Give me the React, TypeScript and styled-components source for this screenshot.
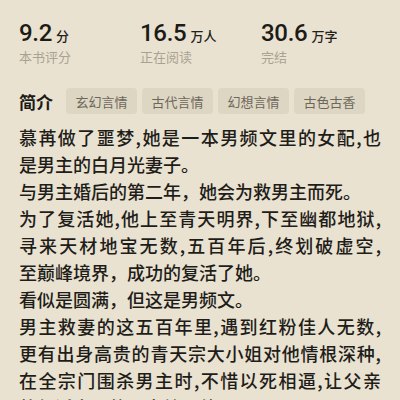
import * as React from 'react';
import styled, { createGlobalStyle } from 'styled-components';

const GlobalStyle = createGlobalStyle`
  html, body {
    margin: 0;
    padding: 0;
    background: #e9e2d0;
  }
  body {
    font-family: "Noto Sans CJK SC", "Noto Sans", sans-serif;
    color: #1f1d1a;
    overflow: hidden;
  }
`;

const Page = styled.div`
  display: flex;
  flex-direction: column;
  padding: 19px 19px 0;
  height: 400px;
  box-sizing: border-box;
  overflow: hidden;
`;

const Stats = styled.div`
  display: grid;
  grid-template-columns: repeat(3, 121px);
`;

const Stat = styled.div`
  display: flex;
  flex-direction: column;
`;

const Value = styled.div`
  display: flex;
  align-items: baseline;
  height: 28px;
  line-height: 28px;
`;

const Num = styled.span`
  font-family: Roboto, "Noto Sans", sans-serif;
  font-size: 24px;
  font-weight: 500;
  color: #1d1b17;
  letter-spacing: -0.3px;
`;

const Unit = styled.span`
  font-size: 13px;
  font-weight: 500;
  margin-left: 4px;
  color: #24211c;
`;

const Label = styled.div`
  margin-top: 1px;
  font-size: 13px;
  line-height: 18px;
  color: #a9a293;
`;

const IntroHeader = styled.div`
  display: flex;
  align-items: center;
  margin-top: 22px;
  height: 26px;
`;

const Title = styled.div`
  font-size: 17px;
  font-weight: 700;
  color: #1d1b17;
  margin-right: 13px;
`;

const Tags = styled.div`
  display: flex;
  gap: 5px;
`;

const Tag = styled.span`
  display: inline-flex;
  align-items: center;
  height: 26px;
  padding: 0 9.5px;
  border-radius: 4px;
  background: #ddd6c3;
  color: #6d675b;
  font-size: 13px;
`;

const Summary = styled.div`
  margin-top: 10px;
`;

const Para = styled.div``;

const Line = styled.div<{ $justify?: boolean }>`
  font-size: 18px;
  font-weight: 500;
  line-height: 27px;
  white-space: nowrap;
  text-align: justify;
  text-align-last: ${(p) => (p.$justify ? 'justify' : 'left')};
  color: #1f1d1a;
`;

const stats = [
  { num: '9.2', unit: '分', label: '本书评分' },
  { num: '16.5', unit: '万人', label: '正在阅读' },
  { num: '30.6', unit: '万字', label: '完结' },
];

const tags = ['玄幻言情', '古代言情', '幻想言情', '古色古香'];

// each paragraph is split into its rendered lines; all but the last are stretched
const paragraphs = [
  ['慕苒做了噩梦,她是一本男频文里的女配,也', '是男主的白月光妻子。'],
  ['与男主婚后的第二年，她会为救男主而死。'],
  [
    '为了复活她,他上至青天明界,下至幽都地狱,',
    '寻来天材地宝无数,五百年后,终划破虚空,',
    '至巅峰境界，成功的复活了她。',
  ],
  ['看似是圆满，但这是男频文。'],
  [
    '男主救妻的这五百年里,遇到红粉佳人无数,',
    '更有出身高贵的青天宗大小姐对他情根深种,',
    '在全宗门围杀男主时,不惜以死相逼,让父亲',
    '将复活妻子的至宝给了他。',
  ],
];

export default function App() {
  return (
    <>
      <GlobalStyle />
      <Page>
        <Stats>
          {stats.map((s) => (
            <Stat key={s.label}>
              <Value>
                <Num>{s.num}</Num>
                <Unit>{s.unit}</Unit>
              </Value>
              <Label>{s.label}</Label>
            </Stat>
          ))}
        </Stats>
        <IntroHeader>
          <Title>简介</Title>
          <Tags>
            {tags.map((t) => (
              <Tag key={t}>{t}</Tag>
            ))}
          </Tags>
        </IntroHeader>
        <Summary>
          {paragraphs.map((lines, pi) => (
            <Para key={pi}>
              {lines.map((line, li) => (
                <Line key={li} $justify={li < lines.length - 1}>
                  {line}
                </Line>
              ))}
            </Para>
          ))}
        </Summary>
      </Page>
    </>
  );
}
